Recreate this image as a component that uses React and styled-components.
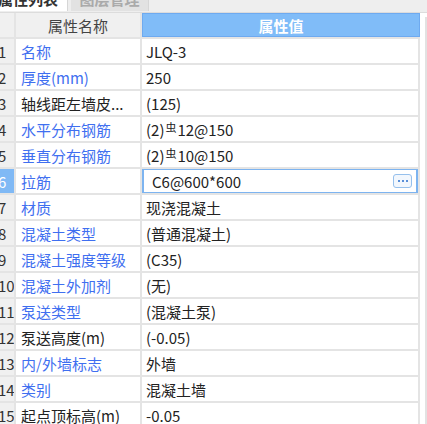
import React from 'react'
import styled, { createGlobalStyle } from 'styled-components'

const GlobalStyle = createGlobalStyle`
  html, body {
    margin: 0;
    padding: 0;
    background: #fff;
    overflow: hidden;
  }
  body {
    font-family: "Noto Sans CJK SC", "Microsoft YaHei", sans-serif;
    font-size: 15px;
    color: #222;
  }
`

const rows = [
  { name: '名称', value: 'JLQ-3', link: true },
  { name: '厚度(mm)', value: '250', link: true },
  { name: '轴线距左墙皮...', value: '(125)' },
  { name: '水平分布钢筋', value: ['(2)', '12@150'], link: true },
  { name: '垂直分布钢筋', value: ['(2)', '10@150'], link: true },
  { name: '拉筋', value: 'C6@600*600', link: true, editing: true },
  { name: '材质', value: '现浇混凝土', link: true },
  { name: '混凝土类型', value: '(普通混凝土)', link: true },
  { name: '混凝土强度等级', value: '(C35)', link: true },
  { name: '混凝土外加剂', value: '(无)', link: true },
  { name: '泵送类型', value: '(混凝土泵)', link: true },
  { name: '泵送高度(m)', value: '(-0.05)' },
  { name: '内/外墙标志', value: '外墙', link: true },
  { name: '类别', value: '混凝土墙', link: true },
  { name: '起点顶标高(m)', value: '-0.05' },
]

const Page = styled.div`
  width: 427px;
  height: 424px;
  display: flex;
  flex-direction: column;
  overflow: hidden;
`

const TabStrip = styled.div`
  height: 13px;
  flex: none;
  display: flex;
  align-items: flex-end;
  background: #eeeeee;
  border-bottom: 1px solid #dcdcdc;
  overflow: hidden;
  box-sizing: border-box;
`

const Tab = styled.div`
  height: 26px;
  width: ${(p) => p.$w}px;
  flex: none;
  display: flex;
  align-items: center;
  justify-content: ${(p) => (p.$active ? 'flex-start' : 'center')};
  margin-right: 3px;
  box-sizing: border-box;
  background: ${(p) => (p.$active ? '#ffffff' : '#e2e2e2')};
  color: ${(p) => (p.$active ? '#333' : '#aaaaaa')};
  border-right: 1px solid #d6d6d6;
  font-size: 15px;
  font-weight: 600;
  line-height: 1;
  transform: translateY(-1px);
  white-space: nowrap;
  overflow: hidden;

  span {
    margin-left: ${(p) => (p.$active ? -2 : 0)}px;
  }
`

const Body = styled.div`
  flex: 1;
  display: flex;
`

const Grid = styled.div`
  width: 420px;
  flex: none;
  display: flex;
  flex-direction: column;
`

const Row = styled.div`
  display: grid;
  grid-template-columns: 16px 126px 1fr;
  height: 26px;
  flex: none;
  box-sizing: border-box;
  border-bottom: 2px solid #e4e4e4;
`

const IndexCell = styled.div`
  display: flex;
  align-items: center;
  overflow: hidden;
  background: ${(p) => (p.$selected ? '#80b9f5' : '#f0f0f0')};
  color: ${(p) => (p.$selected ? '#fff' : '#333')};
  border-right: 2px solid #e4e4e4;
  box-sizing: border-box;
  white-space: nowrap;

  span {
    margin-left: -2px;
  }
`

const HeadCell = styled.div`
  display: flex;
  align-items: center;
  justify-content: center;
  box-sizing: border-box;
  background: ${(p) => (p.$accent ? '#80bcf8' : '#f0f0f0')};
  color: ${(p) => (p.$accent ? '#fff' : '#444')};
  font-weight: ${(p) => (p.$accent ? 700 : 400)};
  border: ${(p) => (p.$accent ? '1px solid #6eaaf0' : 'none')};
  border-right: ${(p) => (p.$accent ? '1px solid #6eaaf0' : '2px solid #e4e4e4')};
`

const NameCell = styled.div`
  display: flex;
  align-items: center;
  padding-left: 5px;
  color: ${(p) => (p.$link ? '#3f6ff0' : '#222')};
  border-right: 2px solid #e4e4e4;
  white-space: nowrap;
  overflow: hidden;
`

const ValueCell = styled.div`
  display: flex;
  align-items: center;
  padding-left: 4px;
  border-right: 2px solid #e4e4e4;
  white-space: nowrap;
  overflow: hidden;
`

const Editor = styled.div`
  flex: 1;
  align-self: stretch;
  margin: -1px 0 -1px -4px;
  display: flex;
  align-items: center;
  justify-content: space-between;
  padding: 0 4px 0 8px;
  border: 2px solid #7db4f0;
  background: #fff;
`

const MoreButton = styled.div`
  width: 19px;
  height: 14px;
  box-sizing: border-box;
  border: 1px solid #96c0ec;
  border-radius: 3px;
  background: #f2f7fd;
  display: flex;
  align-items: center;
  justify-content: center;
  gap: 2px;

  i {
    width: 2px;
    height: 2px;
    background: #5a8fd8;
  }
`

const Rebar = styled.span`
  font-size: 11px;
  position: relative;
  top: -2px;
  margin: 0 1px;
`

const Scroll = styled.div`
  flex: 1;
  border-left: 1px solid #fff;
  border-right: 2px solid #e2e2e2;
  margin-top: 4px;
`

const renderValue = (value) => {
  if (Array.isArray(value)) {
    return (
      <>
        {value[0]}
        <Rebar>虫</Rebar>
        {value[1]}
      </>
    )
  }
  return value
}

export default function App() {
  return (
    <Page>
      <GlobalStyle />
      <TabStrip>
        <Tab $active $w={68}>
          <span>属性列表</span>
        </Tab>
        <Tab $w={78}>
          <span>图层管理</span>
        </Tab>
      </TabStrip>
      <Body>
        <Grid>
          <Row>
            <IndexCell />
            <HeadCell>属性名称</HeadCell>
            <HeadCell $accent>属性值</HeadCell>
          </Row>
          {rows.map((row, index) => (
            <Row key={index}>
              <IndexCell $selected={row.editing}>
                <span>{index + 1}</span>
              </IndexCell>
              <NameCell $link={row.link}>{row.name}</NameCell>
              <ValueCell>
                {row.editing ? (
                  <Editor>
                    {row.value}
                    <MoreButton>
                      <i />
                      <i />
                      <i />
                    </MoreButton>
                  </Editor>
                ) : (
                  renderValue(row.value)
                )}
              </ValueCell>
            </Row>
          ))}
        </Grid>
        <Scroll />
      </Body>
    </Page>
  )
}
